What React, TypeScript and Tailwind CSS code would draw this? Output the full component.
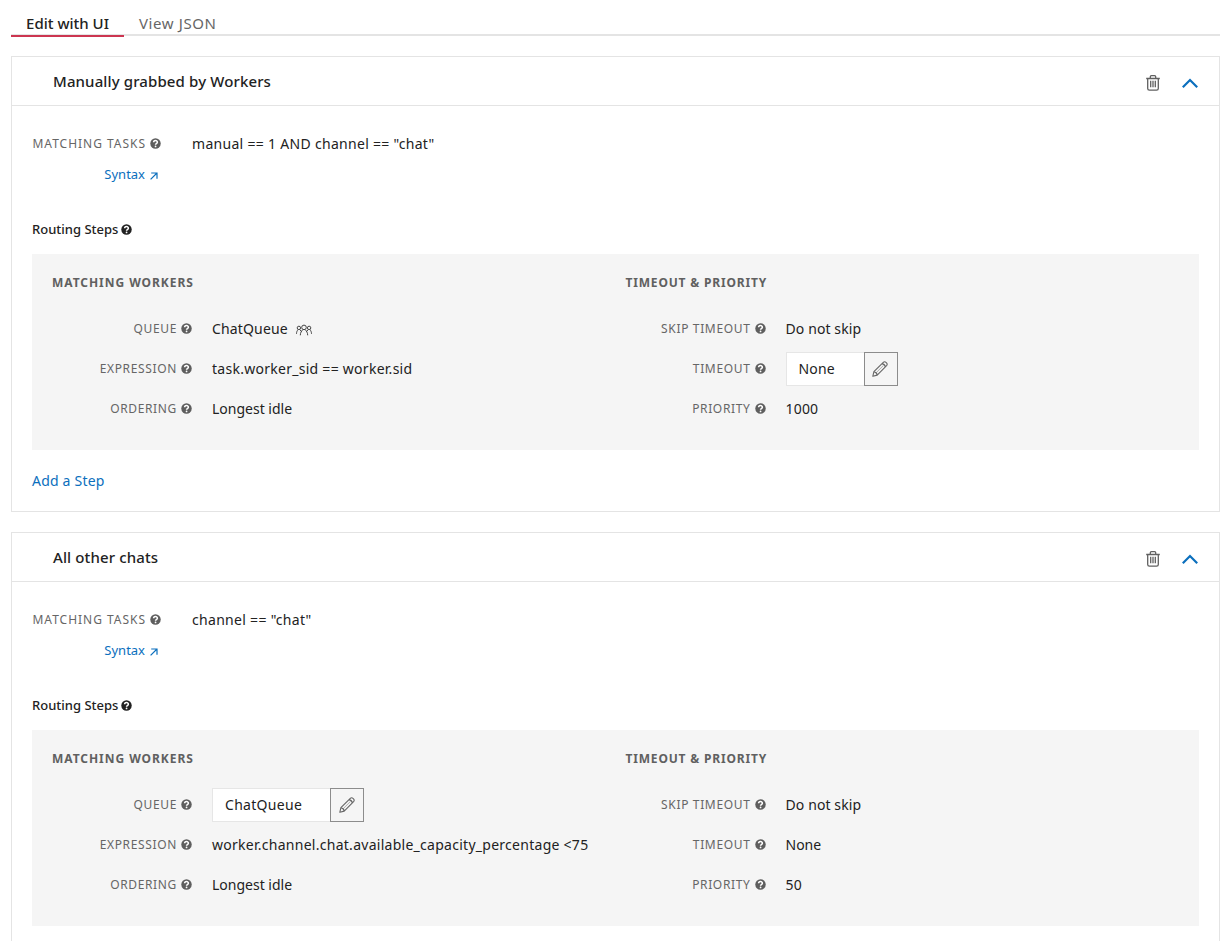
import type { ReactNode } from 'react';

interface Field {
  label: string;
  value: string;
  editable?: boolean;
  boxWidth?: string;
  showWorkers?: boolean;
  tracking?: string;
}

interface Filter {
  name: string;
  expression: string;
  workers: Field[];
  timing: Field[];
  canAddStep?: boolean;
}

const filters: Filter[] = [
  {
    name: 'Manually grabbed by Workers',
    expression: 'manual == 1 AND channel == "chat"',
    canAddStep: true,
    workers: [
      { label: 'Queue', value: 'ChatQueue', showWorkers: true, tracking: 'tracking-[0.15px]' },
      { label: 'Expression', value: 'task.worker_sid == worker.sid', tracking: 'tracking-[0.27px]' },
      { label: 'Ordering', value: 'Longest idle' },
    ],
    timing: [
      { label: 'Skip Timeout', value: 'Do not skip', tracking: 'tracking-[0.1px]' },
      { label: 'Timeout', value: 'None', editable: true, boxWidth: 'w-[78px]', tracking: 'tracking-[0.15px]' },
      { label: 'Priority', value: '1000', tracking: 'tracking-[0.2px]' },
    ],
  },
  {
    name: 'All other chats',
    expression: 'channel == "chat"',
    workers: [
      { label: 'Queue', value: 'ChatQueue', editable: true, boxWidth: 'w-[118px]', tracking: 'tracking-[0.3px]' },
      { label: 'Expression', value: 'worker.channel.chat.available_capacity_percentage <75', tracking: 'tracking-[0.27px]' },
      { label: 'Ordering', value: 'Longest idle' },
    ],
    timing: [
      { label: 'Skip Timeout', value: 'Do not skip', tracking: 'tracking-[0.1px]' },
      { label: 'Timeout', value: 'None' },
      { label: 'Priority', value: '50', tracking: 'tracking-[0.2px]' },
    ],
  },
];

function HelpIcon({ className = 'text-[#5e5e5e]' }: { className?: string }) {
  return (
    <svg viewBox="0 0 20 20" className={`mb-px size-[11px] shrink-0 ${className}`}>
      <circle cx="10" cy="10" r="9.5" fill="currentColor" />
      <path d="M6.600 7.800c0-4.200 6.800-4.200 6.800 0 0 2.300-3.300 2.200-3.300 4.400" fill="none" stroke="white" strokeWidth="2.800" />
      <circle cx="10.100" cy="15.300" r="1.600" fill="white" />
    </svg>
  );
}

function TrashIcon() {
  return (
    <svg viewBox="0 0 14 16" className="h-4 w-3.5" fill="none" stroke="#606060" strokeWidth="1.300">
      <path d="M.2 3.500h13.600M4.300 3.500V1.800c0-.7.400-1.100 1.100-1.100h3.200c.7 0 1.100.4 1.100 1.100v1.700M1.700 3.500v10c0 1 .7 1.700 1.700 1.700h7.200c1 0 1.700-.7 1.700-1.700v-10M4.700 5.800v6.500M7 5.800v6.500M9.300 5.800v6.500" />
    </svg>
  );
}

function PencilIcon() {
  return (
    <svg viewBox="0 0 16 16" className="mr-px mb-px size-4" fill="none" stroke="#666" strokeWidth="1.100" strokeLinejoin="round">
      <path d="M.8 15.300l1.100-4.600L11.300 1.300c1.700-1.700 5.100 1.300 3.300 3.400L5.200 14.100.8 15.300zM1.900 10.700c1.500.2 3.100 1.500 3.300 3.400M10 2.600c1.600.2 3.100 1.700 3.300 3.400" />
      <path d="M3.700 12.200l7.900-7.900" strokeWidth=".5" />
    </svg>
  );
}

function WorkersIcon() {
  return (
    <svg viewBox="0 0 16 12" className="h-3 w-4" fill="none" stroke="#444" strokeWidth="1">
      <circle cx="8" cy="3.400" r="2.300" />
      <circle cx="2.900" cy="3.900" r="1.700" />
      <circle cx="13.100" cy="3.900" r="1.700" />
      <path d="M4.300 11.300c0-2.500 1.200-4.300 2.500-5.600M11.700 11.300c0-2.500-1.200-4.300-2.500-5.600M.5 9.800c0-2 .7-3 1.500-4.200M3.800 5.600l1.600 1.900M15.500 9.800c0-2-.7-3-1.500-4.200M12.200 5.600l-1.600 1.900" />
    </svg>
  );
}

function Label({ children, tracking = 'tracking-[0.65px]' }: { children: ReactNode; tracking?: string }) {
  return (
    <div className="flex items-center justify-end gap-1 text-[12px] text-[#666]">
      <span className={`uppercase whitespace-nowrap ${tracking}`}>{children}</span>
      <HelpIcon />
    </div>
  );
}

function FieldRow({ label, value, editable, boxWidth, showWorkers, tracking = 'tracking-normal' }: Field) {
  return (
    <div className="grid h-10 grid-cols-[140px_1fr] items-center gap-5">
      <Label>{label}</Label>
      {editable ? (
        <div className="flex h-[34px]">
          <div className={`flex items-center border border-r-0 border-[#e6e6e6] bg-white pb-0.5 pl-3 ${boxWidth} ${tracking}`}>{value}</div>
          <button className="flex w-[34px] items-center justify-center border border-[#8c8c8c]">
            <PencilIcon />
          </button>
        </div>
      ) : (
        <div className={`flex items-center gap-2 pb-0.5 whitespace-nowrap ${tracking}`}>
          {value}
          {showWorkers && (
            <span className="pt-[3px]">
              <WorkersIcon />
            </span>
          )}
        </div>
      )}
    </div>
  );
}

function FieldGroup({ title, fields, tracking }: { title: string; fields: Field[]; tracking: string }) {
  return (
    <div>
      <h4 className={`mb-[17px] h-[18px] text-[12px] leading-[18px] font-bold text-[#606060] uppercase ${tracking}`}>{title}</h4>
      {fields.map((f) => (
        <FieldRow key={f.label} {...f} />
      ))}
    </div>
  );
}

function FilterCard({ filter }: { filter: Filter }) {
  return (
    <section className="mb-5 h-[456px] border border-[#e4e4e4]">
      <header className="flex h-[49px] items-center border-b border-[#e4e4e4] pr-[21px] pl-[41px]">
        <h3 className="flex-1 text-[15px] font-medium tracking-[0.12px] text-[#222]">{filter.name}</h3>
        <div className="flex items-center gap-[22px] pt-[3px]">
          <TrashIcon />
          <svg viewBox="0 0 16 10" className="h-2.5 w-4" fill="none" stroke="#0b6fbd" strokeWidth="2.200">
            <path d="M.8 9.200L8 2 15.200 9.200" />
          </svg>
        </div>
      </header>
      <div className="px-5 pt-[18px]">
        <div className="grid h-10 grid-cols-[129px_1fr] items-center gap-[31px]">
          <Label tracking="tracking-[0.98px]">Matching Tasks</Label>
          <div className="pb-0.5 tracking-[0.3px]">{filter.expression}</div>
        </div>
        <a className="flex h-[22px] w-[126px] items-center justify-end gap-[5px] text-[13px] text-[#0b6fbd]">
          Syntax
          <svg viewBox="0 0 8 8" className="mt-0.5 size-2" fill="none" stroke="currentColor" strokeWidth="1.200">
            <path d="M.6 7.400L7 1M1.200 1H7v5.800" />
          </svg>
        </a>
        <h4 className="mt-8 flex h-6 items-center gap-[3px] text-[13px] font-medium">
          Routing Steps
          <HelpIcon className="text-[#222]" />
        </h4>
        <div className="mt-3 grid h-[196px] grid-cols-2 bg-[#f5f5f5] pt-5 pl-5">
          <FieldGroup title="Matching Workers" fields={filter.workers} tracking="tracking-[0.95px]" />
          <FieldGroup title="Timeout &amp; Priority" fields={filter.timing} tracking="tracking-[0.82px]" />
        </div>
        {filter.canAddStep && <a className="mt-[19px] flex h-[22px] items-center tracking-[0.2px] text-[#0b6fbd]">Add a Step</a>}
      </div>
    </section>
  );
}

export default function App() {
  return (
    <main className="h-[941px] overflow-hidden bg-white px-[11px] font-['Noto_Sans',sans-serif] text-[14px] text-[#222]">
      <nav className="mb-5 flex h-9 border-b-2 border-[#e4e4e4] pt-3 text-[15px]">
        <div className="-mb-[3px] flex w-[113px] justify-center border-b-2 border-[#cc3550] font-medium">
          <span className="leading-[23px]">Edit with UI</span>
        </div>
        <div className="pl-[15px] leading-[23px] tracking-[0.6px] text-[#666]">View JSON</div>
      </nav>
      {filters.map((f) => (
        <FilterCard key={f.name} filter={f} />
      ))}
    </main>
  );
}
